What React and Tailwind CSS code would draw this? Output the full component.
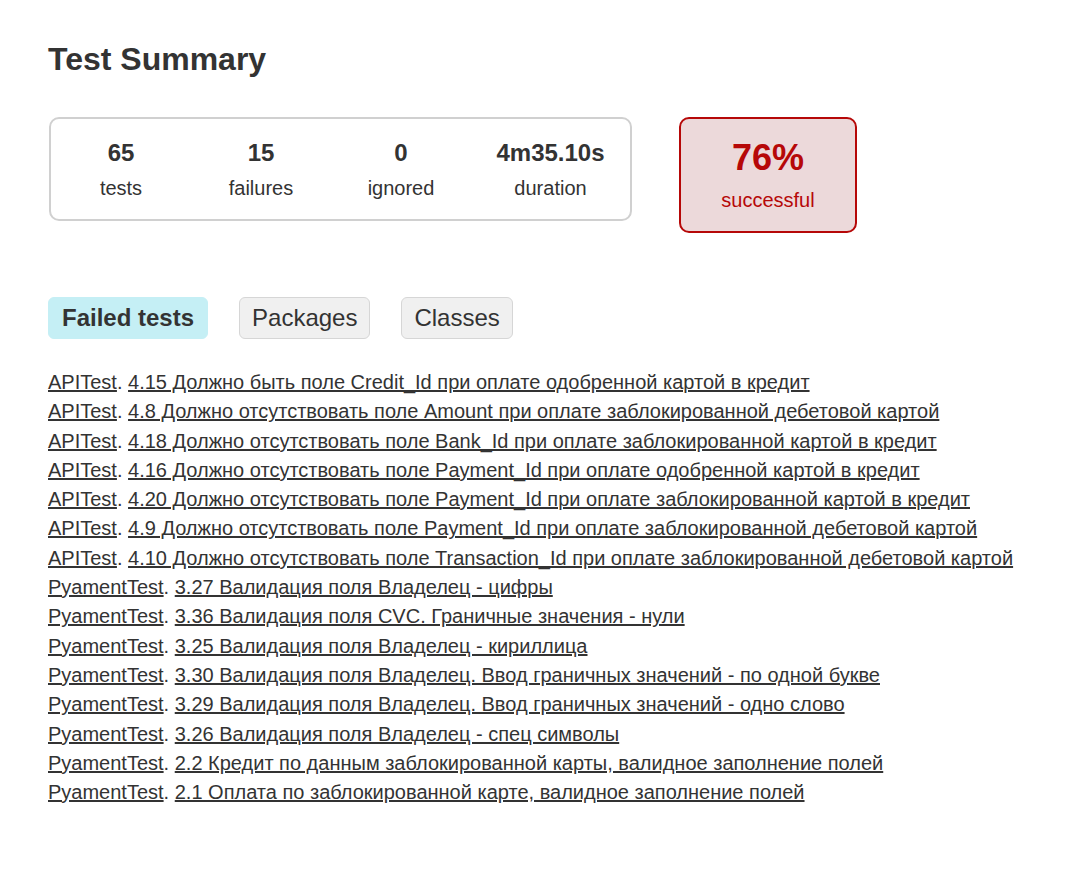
import React from 'react';

const stats = [
  { value: '65', label: 'tests', w: 'w-[140px]' },
  { value: '15', label: 'failures', w: 'w-[140px]' },
  { value: '0', label: 'ignored', w: 'w-[140px]' },
  { value: '4m35.10s', label: 'duration', w: 'w-[159px]' },
];

const failed = [
  ['APITest', '4.15 Должно быть поле Credit_Id при оплате одобренной картой в кредит'],
  ['APITest', '4.8 Должно отсутствовать поле Amount при оплате заблокированной дебетовой картой'],
  ['APITest', '4.18 Должно отсутствовать поле Bank_Id при оплате заблокированной картой в кредит'],
  ['APITest', '4.16 Должно отсутствовать поле Payment_Id при оплате одобренной картой в кредит'],
  ['APITest', '4.20 Должно отсутствовать поле Payment_Id при оплате заблокированной картой в кредит'],
  ['APITest', '4.9 Должно отсутствовать поле Payment_Id при оплате заблокированной дебетовой картой'],
  ['APITest', '4.10 Должно отсутствовать поле Transaction_Id при оплате заблокированной дебетовой картой'],
  ['PyamentTest', '3.27 Валидация поля Владелец - цифры'],
  ['PyamentTest', '3.36 Валидация поля CVC. Граничные значения - нули'],
  ['PyamentTest', '3.25 Валидация поля Владелец - кириллица'],
  ['PyamentTest', '3.30 Валидация поля Владелец. Ввод граничных значений - по одной букве'],
  ['PyamentTest', '3.29 Валидация поля Владелец. Ввод граничных значений - одно слово'],
  ['PyamentTest', '3.26 Валидация поля Владелец - спец символы'],
  ['PyamentTest', '2.2 Кредит по данным заблокированной карты, валидное заполнение полей'],
  ['PyamentTest', '2.1 Оплата по заблокированной карте, валидное заполнение полей'],
];

const tabs = [
  { name: 'Failed tests', active: true },
  { name: 'Packages' },
  { name: 'Classes' },
];

export default function App() {
  return (
    <div
      className="min-h-[894px] bg-white text-[#333] pl-[48px] pt-[41px]"
      style={{ fontFamily: '"Liberation Sans", Arial, sans-serif' }}
    >
      <h1 className="text-[32px] leading-[36px] font-bold">Test Summary</h1>

      <div className="flex items-start mt-[40px]">
        <div className="flex border-2 border-[#d0d0d0] rounded-[10px] py-[20px] ml-[1px]">
          {stats.map((s) => (
            <div key={s.label} className={`${s.w} flex flex-col items-center`}>
              <div className="text-[24px] leading-[28px] font-bold">{s.value}</div>
              <div className="text-[20px] leading-[22px] mt-[10px]">{s.label}</div>
            </div>
          ))}
        </div>

        <div className="ml-[47px] w-[178px] border-2 border-[#b60808] bg-[#ecd9da] rounded-[10px] pt-[18px] pb-[20px] flex flex-col items-center text-[#b60808]">
          <div className="text-[36px] leading-[42px] font-bold">76%</div>
          <div className="text-[20px] leading-[22px] mt-[10px]">successful</div>
        </div>
      </div>

      <ul className="flex gap-[31px] mt-[64px]">
        {tabs.map((t) =>
          t.active ? (
            <li
              key={t.name}
              className="border border-[#c5eff5] bg-[#c5eff5] rounded-[6px] px-[13px] py-[6px] text-[24px] leading-[28px] font-bold"
            >
              {t.name}
            </li>
          ) : (
            <li
              key={t.name}
              className="border border-[#d6d6d6] bg-[#f0f0f0] rounded-[6px] px-[12px] py-[6px] text-[24px] leading-[28px]"
            >
              {t.name}
            </li>
          )
        )}
      </ul>

      <ul className="mt-[29px] text-[20px]">
        {failed.map(([cls, name], i) => (
          <li key={i} className="h-[29.3px] leading-[29.3px] whitespace-nowrap">
            <a href="#" className="underline text-[#333]">{cls}</a>.{' '}
            <a href="#" className="underline text-[#333]">{name}</a>
          </li>
        ))}
      </ul>
    </div>
  );
}
